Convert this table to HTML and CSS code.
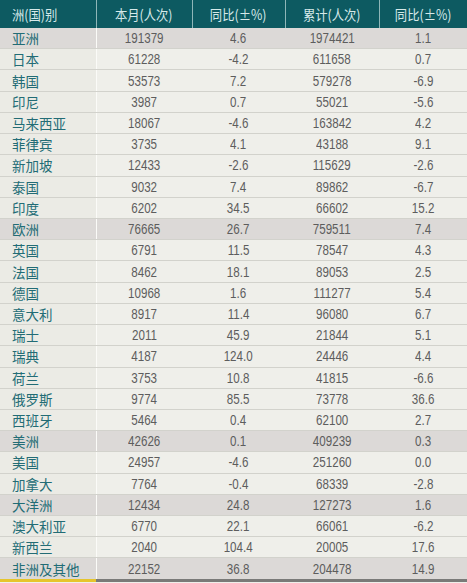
FILE: index.html
```html
<!DOCTYPE html>
<html lang="zh">
<head>
<meta charset="utf-8">
<link rel="stylesheet" href="styles.css">
</head>
<body>
<table class="stats">
<colgroup><col class="c1"><col class="c2"><col class="c3"><col class="c4"><col class="c5"></colgroup>
<thead>
<tr><th class="first"><span class="h">洲(国)别</span></th><th><span class="h">本月(人次)</span></th><th><span class="h">同比(±%)</span></th><th><span class="h">累计(人次)</span></th><th><span class="h">同比(±%)</span></th></tr>
</thead>
<tbody>
<tr class="region"><td class="name">亚洲</td><td><span class="n">191379</span></td><td><span class="n">4.6</span></td><td><span class="n">1974421</span></td><td><span class="n">1.1</span></td></tr>
<tr><td class="name">日本</td><td><span class="n">61228</span></td><td><span class="n">-4.2</span></td><td><span class="n">611658</span></td><td><span class="n">0.7</span></td></tr>
<tr><td class="name">韩国</td><td><span class="n">53573</span></td><td><span class="n">7.2</span></td><td><span class="n">579278</span></td><td><span class="n">-6.9</span></td></tr>
<tr><td class="name">印尼</td><td><span class="n">3987</span></td><td><span class="n">0.7</span></td><td><span class="n">55021</span></td><td><span class="n">-5.6</span></td></tr>
<tr><td class="name">马来西亚</td><td><span class="n">18067</span></td><td><span class="n">-4.6</span></td><td><span class="n">163842</span></td><td><span class="n">4.2</span></td></tr>
<tr><td class="name">菲律宾</td><td><span class="n">3735</span></td><td><span class="n">4.1</span></td><td><span class="n">43188</span></td><td><span class="n">9.1</span></td></tr>
<tr><td class="name">新加坡</td><td><span class="n">12433</span></td><td><span class="n">-2.6</span></td><td><span class="n">115629</span></td><td><span class="n">-2.6</span></td></tr>
<tr><td class="name">泰国</td><td><span class="n">9032</span></td><td><span class="n">7.4</span></td><td><span class="n">89862</span></td><td><span class="n">-6.7</span></td></tr>
<tr><td class="name">印度</td><td><span class="n">6202</span></td><td><span class="n">34.5</span></td><td><span class="n">66602</span></td><td><span class="n">15.2</span></td></tr>
<tr class="region"><td class="name">欧洲</td><td><span class="n">76665</span></td><td><span class="n">26.7</span></td><td><span class="n">759511</span></td><td><span class="n">7.4</span></td></tr>
<tr><td class="name">英国</td><td><span class="n">6791</span></td><td><span class="n">11.5</span></td><td><span class="n">78547</span></td><td><span class="n">4.3</span></td></tr>
<tr><td class="name">法国</td><td><span class="n">8462</span></td><td><span class="n">18.1</span></td><td><span class="n">89053</span></td><td><span class="n">2.5</span></td></tr>
<tr><td class="name">德国</td><td><span class="n">10968</span></td><td><span class="n">1.6</span></td><td><span class="n">111277</span></td><td><span class="n">5.4</span></td></tr>
<tr><td class="name">意大利</td><td><span class="n">8917</span></td><td><span class="n">11.4</span></td><td><span class="n">96080</span></td><td><span class="n">6.7</span></td></tr>
<tr><td class="name">瑞士</td><td><span class="n">2011</span></td><td><span class="n">45.9</span></td><td><span class="n">21844</span></td><td><span class="n">5.1</span></td></tr>
<tr><td class="name">瑞典</td><td><span class="n">4187</span></td><td><span class="n">124.0</span></td><td><span class="n">24446</span></td><td><span class="n">4.4</span></td></tr>
<tr><td class="name">荷兰</td><td><span class="n">3753</span></td><td><span class="n">10.8</span></td><td><span class="n">41815</span></td><td><span class="n">-6.6</span></td></tr>
<tr><td class="name">俄罗斯</td><td><span class="n">9774</span></td><td><span class="n">85.5</span></td><td><span class="n">73778</span></td><td><span class="n">36.6</span></td></tr>
<tr><td class="name">西班牙</td><td><span class="n">5464</span></td><td><span class="n">0.4</span></td><td><span class="n">62100</span></td><td><span class="n">2.7</span></td></tr>
<tr class="region"><td class="name">美洲</td><td><span class="n">42626</span></td><td><span class="n">0.1</span></td><td><span class="n">409239</span></td><td><span class="n">0.3</span></td></tr>
<tr><td class="name">美国</td><td><span class="n">24957</span></td><td><span class="n">-4.6</span></td><td><span class="n">251260</span></td><td><span class="n">0.0</span></td></tr>
<tr><td class="name">加拿大</td><td><span class="n">7764</span></td><td><span class="n">-0.4</span></td><td><span class="n">68339</span></td><td><span class="n">-2.8</span></td></tr>
<tr class="region"><td class="name">大洋洲</td><td><span class="n">12434</span></td><td><span class="n">24.8</span></td><td><span class="n">127273</span></td><td><span class="n">1.6</span></td></tr>
<tr><td class="name">澳大利亚</td><td><span class="n">6770</span></td><td><span class="n">22.1</span></td><td><span class="n">66061</span></td><td><span class="n">-6.2</span></td></tr>
<tr><td class="name">新西兰</td><td><span class="n">2040</span></td><td><span class="n">104.4</span></td><td><span class="n">20005</span></td><td><span class="n">17.6</span></td></tr>
<tr class="region last"><td class="name">非洲及其他</td><td><span class="n">22152</span></td><td><span class="n">36.8</span></td><td><span class="n">204478</span></td><td><span class="n">14.9</span></td></tr>
</tbody>
</table>
<div class="footbar"><div class="foot-key"></div><div class="foot-rest"></div></div>
</body>
</html>
```
FILE: styles.css
```css
html, body {
  margin: 0;
  padding: 0;
  background: #efefea;
}
body {
  width: 467px;
  height: 583px;
  overflow: hidden;
}
.stats {
  width: 467px;
  border-collapse: collapse;
  table-layout: fixed;
  font-family: "Liberation Sans", "Noto Sans CJK SC", sans-serif;
}
.c1 { width: 96px; }
.c2 { width: 96px; }
.c3 { width: 93px; }
.c4 { width: 94px; }
.c5 { width: 88px; }

.stats thead tr { height: 27.5px; }
.stats th {
  height: 27.5px;
  padding: 0;
  background: #0d5a61;
  color: #d6e9e9;
  font-weight: normal;
  font-size: 14px;
  text-align: center;
  border-left: 1px solid #8fb6b8;
  box-sizing: border-box;
}
.stats th.first {
  border-left: none;
  text-align: left;
  padding-left: 12px;
}
.h {
  display: inline-block;
  font-family: "Noto Sans CJK SC", sans-serif;
  transform: scaleX(0.88);
  transform-origin: center;
}
.stats th.first .h { transform-origin: left center; }

.stats tbody tr { height: 21.23px; }
.stats td {
  height: 21.23px;
  padding: 0;
  box-sizing: border-box;
  border-bottom: 1px solid #d2d2cc;
  text-align: center;
  color: #5d5d5d;
  font-size: 14.5px;
  line-height: 18px;
  background: #efefea;
}
.stats td.name {
  text-align: left;
  padding-left: 12px;
  color: #226c75;
  font-family: "Noto Sans CJK SC", sans-serif;
  font-size: 13.5px;
  border-right: 1px solid #fbfbf8;
  background: #ebebe5;
}
.stats tr.region td {
  background: #dcd9d7;
}
.stats tr.last td {
  border-bottom: none;
}
.n {
  display: inline-block;
  transform: scaleX(0.8);
  transform-origin: center;
}
.footbar {
  display: flex;
  height: 3px;
}
.foot-key {
  width: 96px;
  background: #e6c52c;
}
.foot-rest {
  flex: 1;
  background: #7a7a78;
}
```
